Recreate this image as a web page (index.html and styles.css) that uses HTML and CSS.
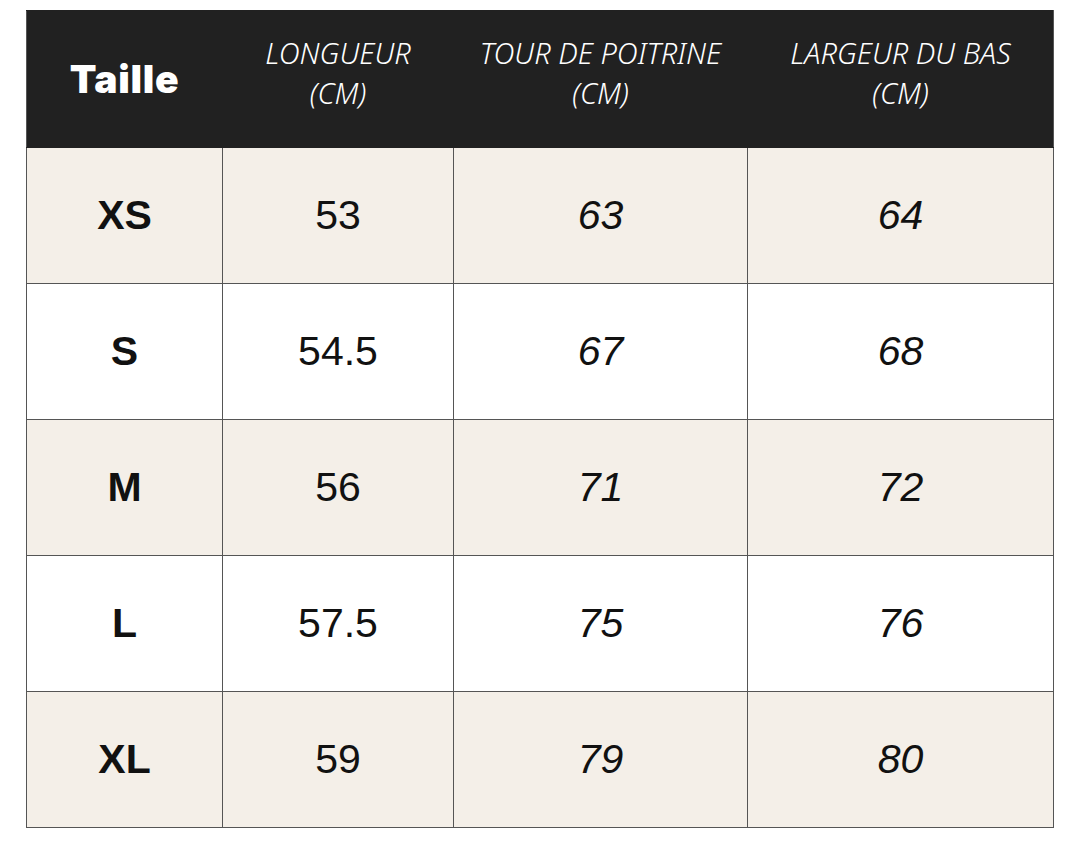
FILE: index.html
```html
<!DOCTYPE html>
<html lang="fr">
<head>
<meta charset="utf-8">
<link rel="stylesheet" href="styles.css">
</head>
<body>
<table class="sizes">
  <colgroup>
    <col class="c1"><col class="c2"><col class="c3"><col class="c4">
  </colgroup>
  <thead>
    <tr>
      <th class="h-size">Taille</th>
      <th class="h-meas">LONGUEUR<br>(CM)</th>
      <th class="h-meas">TOUR DE POITRINE<br>(CM)</th>
      <th class="h-meas">LARGEUR DU BAS<br>(CM)</th>
    </tr>
  </thead>
  <tbody>
    <tr class="alt"><td class="size">XS</td><td class="num">53</td><td class="it">63</td><td class="it">64</td></tr>
    <tr><td class="size">S</td><td class="num">54.5</td><td class="it">67</td><td class="it">68</td></tr>
    <tr class="alt"><td class="size">M</td><td class="num">56</td><td class="it">71</td><td class="it">72</td></tr>
    <tr><td class="size">L</td><td class="num">57.5</td><td class="it">75</td><td class="it">76</td></tr>
    <tr class="alt"><td class="size">XL</td><td class="num">59</td><td class="it">79</td><td class="it">80</td></tr>
  </tbody>
</table>
</body>
</html>
```
FILE: styles.css
```css
html, body {
  margin: 0;
  background: #ffffff;
}
body {
  padding: 10px 26px 0 26px;
}
.sizes {
  border-collapse: collapse;
  width: 1027px;
  table-layout: fixed;
}
.c1 { width: 196px; }
.c2 { width: 231px; }
.c3 { width: 294px; }
.c4 { width: 306px; }

.sizes thead tr {
  height: 137px;
  background: #212121;
}
.sizes th {
  color: #ffffff;
  text-align: center;
  vertical-align: middle;
  padding: 0;
  border: 1px solid #212121;
  border-left-color: #555555;
  border-right-color: #555555;
}
.sizes th + th { border-left-color: #212121; }
.sizes th:not(:last-child) { border-right-color: #212121; }
.h-size {
  font-family: "Inter", "Noto Sans", sans-serif;
  font-weight: 900;
  font-size: 39px;
  letter-spacing: 0.7px;
  padding-bottom: 2px !important;
}
.h-meas {
  font-family: "Noto Sans", "Inter", sans-serif;
  font-style: italic;
  font-weight: 300;
  font-size: 29px;
  line-height: 40px;
  padding-bottom: 12px !important;
}
.sizes tbody tr {
  height: 136px;
  background: #ffffff;
}
.sizes tbody tr.alt { background: #f4efe8; }
.sizes td {
  border: 1px solid #555555;
  text-align: center;
  vertical-align: middle;
  padding: 0;
  color: #111111;
  font-family: "Liberation Sans", Arial, sans-serif;
  font-size: 41px;
}
.size { font-weight: 700; font-size: 37px; }
.num { font-weight: 400; }
.it { font-style: italic; }
```
